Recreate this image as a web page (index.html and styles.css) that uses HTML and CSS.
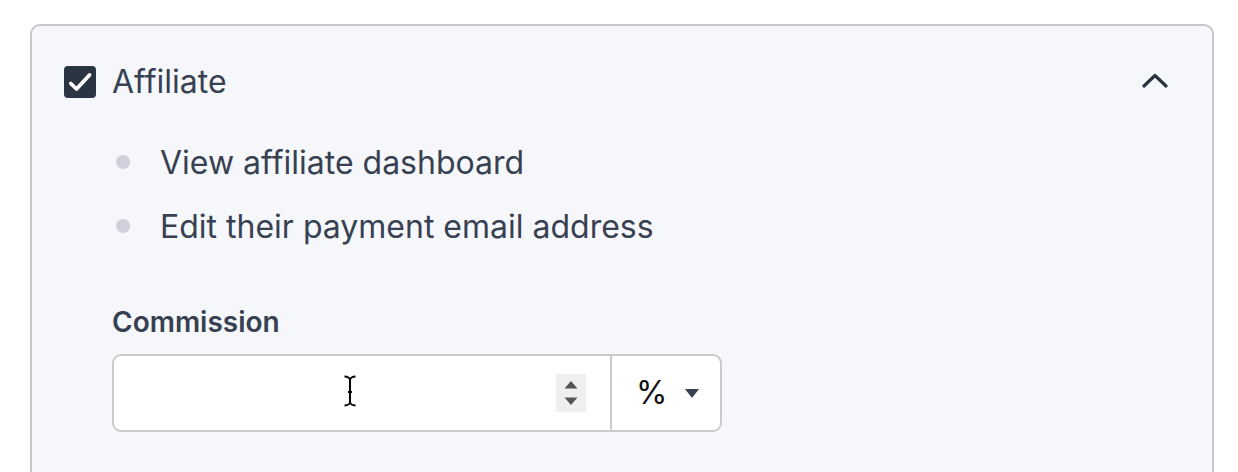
FILE: index.html
```html
<!DOCTYPE html>
<html lang="en">
<head>
<meta charset="utf-8">
<title>Affiliate</title>
<link rel="stylesheet" href="styles.css">
</head>
<body>
<section class="panel">
  <div class="header">
    <label class="check-label">
      <span class="checkbox">
        <svg viewBox="0 0 32 32" width="32" height="32"><path d="M6.8 17.5 L12.5 23 L25.5 9" fill="none" stroke="#fff" stroke-width="3.8" stroke-linecap="round" stroke-linejoin="round"/></svg>
      </span>
      <span class="title">Affiliate</span>
    </label>
    <svg class="chevron" viewBox="0 0 26 15" width="26" height="15"><path d="M2 13 L13 2.5 L24 13" fill="none" stroke="#2b3441" stroke-width="3.2" stroke-linecap="round" stroke-linejoin="round"/></svg>
  </div>
  <ul class="perms">
    <li class="perm"><span class="dot"></span><span>View affiliate dashboard</span></li>
    <li class="perm"><span class="dot"></span><span>Edit their payment email address</span></li>
  </ul>
  <div class="field">
    <div class="label">Commission</div>
    <div class="input-group">
      <div class="num">
        <svg class="ibeam" viewBox="0 0 14 32" width="14" height="32"><path d="M1.5 1.5 C4.5 1.5 7 3 7 5 L7 27 C7 29 4.5 30.5 1.5 30.5 M12.5 1.5 C9.5 1.5 7 3 7 5 M7 27 C7 29 9.5 30.5 12.5 30.5 M5 17 L9 17" fill="none" stroke="#000" stroke-width="2"/></svg>
        <span class="spinner">
          <svg viewBox="0 0 30 38" width="30" height="38"><path d="M8.5 14.5 L15 7 L21.5 14.5 Z" fill="#555"/><path d="M8.5 23.5 L15 31 L21.5 23.5 Z" fill="#555"/></svg>
        </span>
      </div>
      <div class="unit">
        <span class="pct">%</span>
        <svg class="caret" viewBox="0 0 14 9" width="14" height="9"><path d="M0 0 L14 0 L7 9 Z" fill="#374151"/></svg>
      </div>
    </div>
  </div>
</section>
</body>
</html>
```

FILE: styles.css
```css
html, body {
  margin: 0;
  padding: 0;
  background: #ffffff;
  overflow: hidden;
}

body {
  font-family: Inter, "Noto Sans", sans-serif;
  color: #374151;
}

.panel {
  box-sizing: border-box;
  margin: 24px 0 0 30px;
  width: 1184px;
  height: 520px;
  border: 2px solid #c6c7cb;
  border-radius: 10px;
  background: #f6f7fb;
  padding: 40px 44px 40px 32px;
}

.header {
  display: flex;
  align-items: center;
  justify-content: space-between;
  height: 32px;
}

.check-label {
  display: flex;
  align-items: center;
  gap: 16px;
}

.checkbox {
  width: 32px;
  height: 32px;
  border-radius: 4px;
  background: #2b3441;
  display: block;
}

.checkbox svg {
  display: block;
}

.title {
  font-size: 32px;
  line-height: 32px;
  color: #374151;
}

.chevron {
  display: block;
  margin-top: -3px;
}

.perms {
  list-style: none;
  margin: 40px 0 0 0;
  padding: 0 0 0 52px;
  display: flex;
  flex-direction: column;
  gap: 16px;
}

.perm {
  display: flex;
  align-items: center;
  gap: 30px;
  height: 48px;
  font-size: 32px;
  color: #374151;
}

.dot {
  width: 14px;
  height: 14px;
  border-radius: 50%;
  background: #cfd0d9;
  flex: none;
}

.field {
  margin: 56px 0 0 48px;
}

.label {
  font-size: 28px;
  line-height: 32px;
  font-weight: 600;
  color: #374151;
}

.input-group {
  margin-top: 16px;
  box-sizing: border-box;
  width: 610px;
  height: 78px;
  border: 2px solid #c8cacd;
  border-radius: 9px;
  background: #ffffff;
  display: flex;
}

.num {
  position: relative;
  flex: 1;
  display: flex;
  align-items: center;
  justify-content: flex-end;
  padding-right: 24px;
  border-right: 2px solid #c8cacd;
}

.ibeam {
  position: absolute;
  left: 229px;
  top: 19px;
}

.spinner {
  width: 30px;
  height: 38px;
  background: #efefef;
  display: block;
}

.spinner svg {
  display: block;
}

.unit {
  width: 108px;
  box-sizing: border-box;
  padding-left: 24px;
  display: flex;
  align-items: center;
  gap: 18px;
}

.pct {
  font-size: 32px;
  color: #111111;
  line-height: 1;
}

.caret {
  display: block;
}
```
